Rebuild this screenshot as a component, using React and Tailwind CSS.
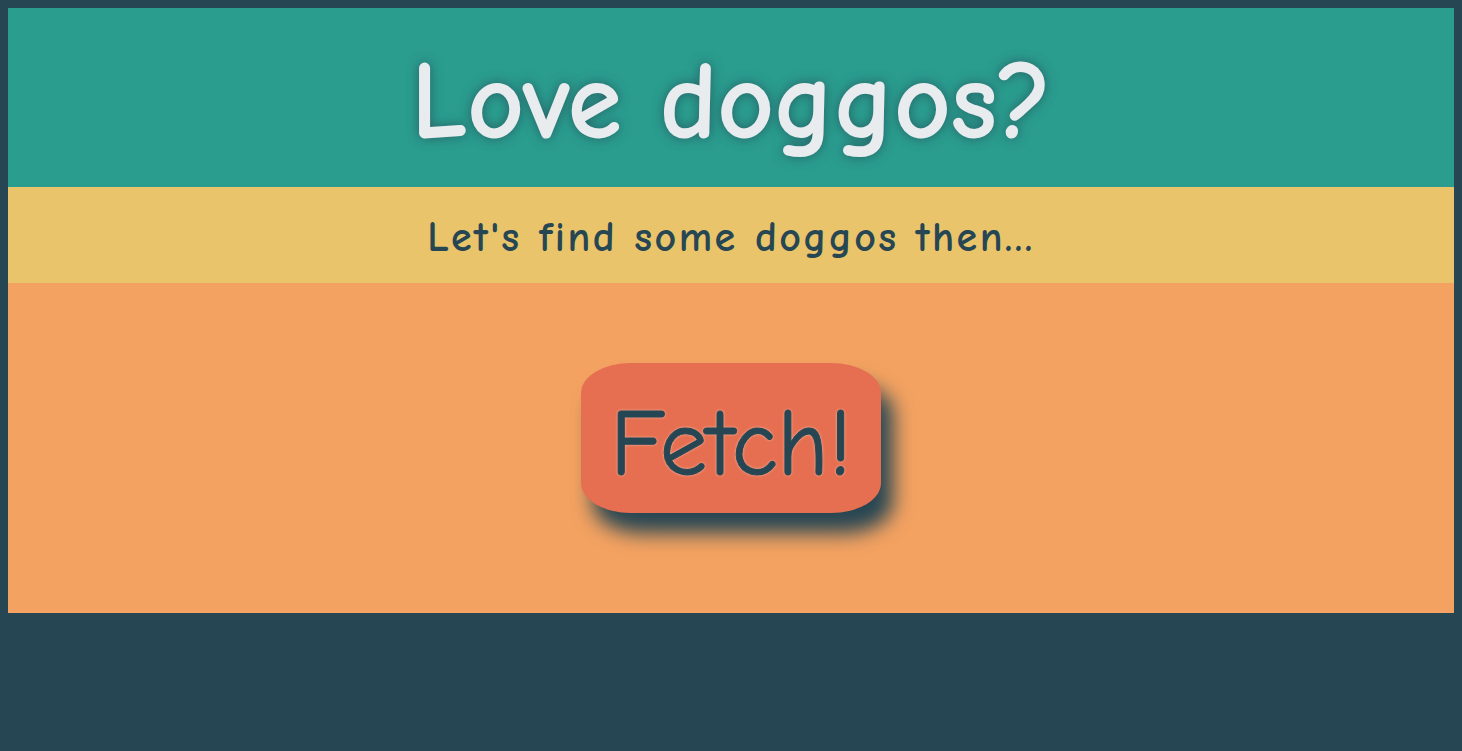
export default function App() {
  const font = { fontFamily: '"Comic Sans MS", "Comic Neue", "Open Sans", sans-serif' };
  return (
    <div className="min-h-[751px] w-full bg-[#264653] p-2" style={font}>
      <div className="flex h-[179px] items-center justify-center bg-[#2a9d8f]">
        <h1 className="pt-[10px] text-[111px] font-bold leading-none tracking-[-0.8px] text-[#e9ecef] [text-shadow:0_0_12px_rgba(38,70,83,0.7)]">
          Love doggos?
        </h1>
      </div>
      <div className="flex h-[96px] items-center justify-center bg-[#e9c46a]">
        <p className="pt-[6px] text-[42px] font-bold leading-none tracking-[2.4px] text-[#264653]">
          Let's find some doggos then...
        </p>
      </div>
      <div className="flex h-[330px] items-start justify-center bg-[#f4a261] pt-[80px]">
        <button className="flex h-[150px] w-[300px] items-center justify-center rounded-[50px/30px] bg-[#e76f51] pt-[12px] text-[95px] leading-none text-[#264653] shadow-[12px_20px_20px_#264653] [text-shadow:0_0_3px_#f4e0d0] [-webkit-text-stroke:1px_#264653]">
          Fetch!
        </button>
      </div>
    </div>
  );
}
